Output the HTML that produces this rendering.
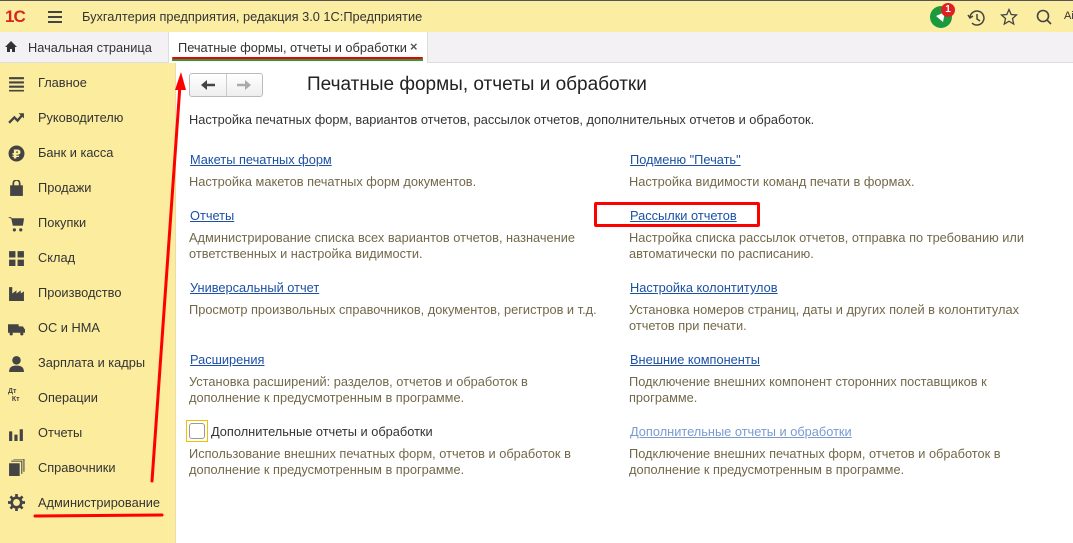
<!DOCTYPE html>
<html><head><meta charset="utf-8"><style>
*{margin:0;padding:0;box-sizing:border-box}
body{width:1073px;height:543px;overflow:hidden;position:relative;background:#fff;font-family:"Liberation Sans",sans-serif;font-size:12.8px;color:#333}
.abs{position:absolute;white-space:nowrap}
#top{position:absolute;left:0;top:0;width:1073px;height:32px;background:#fbeda2;border-top:1px solid #555}
#tabs{position:absolute;left:0;top:32px;width:1073px;height:31px;background:#f4f1f5;border-bottom:1px solid #ddd}
#side{position:absolute;left:0;top:63px;width:176px;height:480px;background:#fcec9e;border-right:1px solid #e8dfa8}
.si{position:absolute;left:38px;font-size:12.8px;color:#333}
.ic{position:absolute;left:8px;width:17px;height:17px}
.lk{position:absolute;color:#1c50a5;text-decoration:underline;font-size:12.8px;white-space:nowrap}
.ds{position:absolute;color:#72684a;font-size:12.8px;line-height:16px;white-space:nowrap}
</style></head><body>
<div id="top">
 <div class="abs" style="left:5px;top:6px;font:bold 17px 'Liberation Sans';color:#d9261c;letter-spacing:-1px">1С</div>
 <div class="abs" style="left:48px;top:10px;width:14px;height:2px;background:#444;box-shadow:0 5px 0 #444,0 10px 0 #444"></div>
 <div class="abs" style="left:82px;top:8px;color:#333">Бухгалтерия предприятия, редакция 3.0 1С:Предприятие</div>
 <div class="abs" style="left:930px;top:5px;width:22px;height:22px;border-radius:50%;background:#1a9a3c"></div>
 <svg class="abs" style="left:934px;top:9px" width="14" height="14"><path d="M2 6 L11 2 L9 12 Z" fill="#fff"/></svg>
 <div class="abs" style="left:941px;top:2px;width:14px;height:14px;border-radius:50%;background:#e02020;color:#fff;font:bold 10px 'Liberation Sans';text-align:center;line-height:14px">1</div>
 <svg class="abs" style="left:966px;top:7px" width="20" height="20" fill="none" stroke="#444" stroke-width="1.5"><path d="M4 9 A7 7 0 1 1 6 15"/><path d="M2 7 L4 10 L7 8"/><path d="M11 6 V11 L14 13"/></svg>
 <svg class="abs" style="left:1000px;top:7px" width="18" height="18" fill="none" stroke="#444" stroke-width="1.3"><path d="M9 1.5 L11.2 6.5 L16.5 7 L12.5 10.5 L13.7 16 L9 13.2 L4.3 16 L5.5 10.5 L1.5 7 L6.8 6.5 Z"/></svg>
 <svg class="abs" style="left:1035px;top:7px" width="18" height="18" fill="none" stroke="#444" stroke-width="1.6"><circle cx="8" cy="8" r="5.5"/><path d="M12 12 L16 16"/></svg>
 <div class="abs" style="left:1064px;top:9px;font-size:11px">Ai</div>
</div>
<div id="tabs">
 <svg class="abs" style="left:4px;top:8px" width="14" height="13"><path d="M7 1 L13 7 H11 V12 H8 V9 H6 V12 H3 V7 H1 Z" fill="#333"/></svg>
 <div class="abs" style="left:28px;top:8px">Начальная страница</div>
 <div class="abs" style="left:168px;top:0;width:260px;height:31px;background:#fff;border-left:1px solid #ddd;border-right:1px solid #ddd"></div>
 <div class="abs" style="left:178px;top:8px">Печатные формы, отчеты и обработки</div>
 <div class="abs" style="left:410px;top:7px;font-weight:bold;color:#555">×</div>
 <div class="abs" style="left:172px;top:25px;width:251px;height:2px;background:#e00;border-radius:1px"></div>
 <div class="abs" style="left:172px;top:27px;width:251px;height:2px;background:#2a9a3c"></div>
</div>
<div id="side">
 <svg class="ic" style="top:12px" viewBox="0 0 16 16"><path d="M1 2h14v2H1zM1 6h14v2H1zM1 10h14v2H1zM1 14h14v1.5H1z" fill="#444"/></svg><div class="si" style="top:12px">Главное</div>
 <svg class="ic" style="top:47px" viewBox="0 0 16 16"><path d="M1 12 L6 7 L9 10 L14 4" fill="none" stroke="#444" stroke-width="2.2"/><path d="M10 3h5v5z" fill="#444"/></svg><div class="si" style="top:47px">Руководителю</div>
 <svg class="ic" style="top:82px" viewBox="0 0 16 16"><circle cx="8" cy="8" r="7.5" fill="#444"/><text x="8" y="12.5" font-size="12" font-weight="bold" fill="#fcec9e" text-anchor="middle" font-family="DejaVu Sans">₽</text></svg><div class="si" style="top:82px">Банк и касса</div>
 <svg class="ic" style="top:117px" viewBox="0 0 16 16"><path d="M2 5h12v10H2z" fill="#444"/><path d="M5 7V3a3 3 0 0 1 6 0v4" fill="none" stroke="#444" stroke-width="1.6"/></svg><div class="si" style="top:117px">Продажи</div>
 <svg class="ic" style="top:152px" viewBox="0 0 16 16"><path d="M0 2h3l2 8h9l1-6H4" fill="#444"/><path d="M3 3h12l-1.5 7h-9z" fill="#444"/><circle cx="6" cy="14" r="1.5" fill="#444"/><circle cx="12" cy="14" r="1.5" fill="#444"/></svg><div class="si" style="top:152px">Покупки</div>
 <svg class="ic" style="top:187px" viewBox="0 0 16 16"><path d="M1 1h6v6H1zM9 1h6v6H9zM1 9h6v6H1zM9 9h6v6H9z" fill="#444"/></svg><div class="si" style="top:187px">Склад</div>
 <svg class="ic" style="top:222px" viewBox="0 0 16 16"><path d="M1 15V2h3v6l4-3v3l4-3v3l3-2v9z" fill="#444"/></svg><div class="si" style="top:222px">Производство</div>
 <svg class="ic" style="top:257px" viewBox="0 0 16 16"><path d="M0 4h10v8H0zM10 6h4l2 3v3h-6z" fill="#444"/><circle cx="3" cy="13" r="1.5" fill="#444"/><circle cx="13" cy="13" r="1.5" fill="#444"/></svg><div class="si" style="top:257px">ОС и НМА</div>
 <svg class="ic" style="top:292px" viewBox="0 0 16 16"><circle cx="8" cy="5" r="4" fill="#444"/><path d="M1 16c0-5 3-6 7-6s7 1 7 6z" fill="#444"/></svg><div class="si" style="top:292px">Зарплата и кадры</div>
 <div class="abs" style="left:8px;top:325px;font:bold 7px 'Liberation Sans';color:#444;line-height:8px">Дт<br>&nbsp;&nbsp;Кт</div><div class="si" style="top:327px">Операции</div>
 <svg class="ic" style="top:362px" viewBox="0 0 16 16"><path d="M1 6h3v9H1zM6 9h3v6H6zM11 4h3v11h-3z" fill="#444"/></svg><div class="si" style="top:362px">Отчеты</div>
 <svg class="ic" style="top:396px" viewBox="0 0 16 16"><path d="M1 4h10v12H1z" fill="#444"/><path d="M3 2h10v12M5 0h10v12" fill="none" stroke="#444"/></svg><div class="si" style="top:397px">Справочники</div>
 <svg class="ic" style="top:431px" viewBox="0 0 16 16"><circle cx="8" cy="8" r="4.5" fill="none" stroke="#444" stroke-width="2.5"/><path d="M8 0v3M8 13v3M0 8h3M13 8h3M2.3 2.3l2.2 2.2M11.5 11.5l2.2 2.2M2.3 13.7l2.2-2.2M11.5 4.5l2.2-2.2" stroke="#444" stroke-width="2.5"/></svg><div class="si" style="top:432px">Администрирование</div>
</div>
<div class="abs" style="left:189px;top:73px;width:74px;height:24px;border:1px solid #bbb;border-radius:3px;background:linear-gradient(#fff,#eee)"></div>
<div class="abs" style="left:226px;top:74px;width:1px;height:22px;background:#ccc"></div>
<svg class="abs" style="left:200px;top:78px" width="16" height="14"><path d="M4 7h11" stroke="#444" stroke-width="2.5"/><path d="M1 7l6-5v10z" fill="#444"/></svg>
<svg class="abs" style="left:236px;top:78px" width="16" height="14"><path d="M1 7h10" stroke="#aaa" stroke-width="2.5"/><path d="M15 7l-6-5v10z" fill="#aaa"/></svg>
<div class="abs" style="left:307px;top:74px;font-size:19px;color:#222">Печатные формы, отчеты и обработки</div>
<div class="abs" style="left:189px;top:112px;color:#333">Настройка печатных форм, вариантов отчетов, рассылок отчетов, дополнительных отчетов и обработок.</div>

<div class="lk" style="left:190px;top:152px">Макеты печатных форм</div>
<div class="ds" style="left:189px;top:174px">Настройка макетов печатных форм документов.</div>
<div class="lk" style="left:190px;top:208px">Отчеты</div>
<div class="ds" style="left:189px;top:230px">Администрирование списка всех вариантов отчетов, назначение<br>ответственных и настройка видимости.</div>
<div class="lk" style="left:190px;top:280px">Универсальный отчет</div>
<div class="ds" style="left:189px;top:302px">Просмотр произвольных справочников, документов, регистров и т.д.</div>
<div class="lk" style="left:190px;top:352px">Расширения</div>
<div class="ds" style="left:189px;top:374px">Установка расширений: разделов, отчетов и обработок в<br>дополнение к предусмотренным в программе.</div>
<div class="abs" style="left:186px;top:420px;width:22px;height:22px;border:1px solid #f0c000"></div>
<div class="abs" style="left:189px;top:423px;width:16px;height:16px;border:1px solid #999;border-radius:3px;background:#fff"></div>
<div class="abs" style="left:211px;top:424px;color:#333">Дополнительные отчеты и обработки</div>
<div class="ds" style="left:189px;top:446px">Использование внешних печатных форм, отчетов и обработок в<br>дополнение к предусмотренным в программе.</div>

<div class="lk" style="left:630px;top:152px">Подменю "Печать"</div>
<div class="ds" style="left:629px;top:174px">Настройка видимости команд печати в формах.</div>
<div class="abs" style="left:594px;top:202px;width:166px;height:25px;border:3px solid #f00;border-radius:2px"></div>
<div class="lk" style="left:630px;top:208px">Рассылки отчетов</div>
<div class="ds" style="left:629px;top:230px">Настройка списка рассылок отчетов, отправка по требованию или<br>автоматически по расписанию.</div>
<div class="lk" style="left:630px;top:280px">Настройка колонтитулов</div>
<div class="ds" style="left:629px;top:302px">Установка номеров страниц, даты и других полей в колонтитулах<br>отчетов при печати.</div>
<div class="lk" style="left:630px;top:352px">Внешние компоненты</div>
<div class="ds" style="left:629px;top:374px">Подключение внешних компонент сторонних поставщиков к<br>программе.</div>
<div class="lk" style="left:630px;top:424px;color:#7a9bd0">Дополнительные отчеты и обработки</div>
<div class="ds" style="left:629px;top:446px">Подключение внешних печатных форм, отчетов и обработок в<br>дополнение к предусмотренным в программе.</div>

<svg class="abs" style="left:0;top:0" width="1073" height="543">
 <path d="M152 481 L180 85" stroke="#f00" stroke-width="3" stroke-linecap="round"/>
 <path d="M181 72 L175 90 L186 90 Z" fill="#f00"/>
 <path d="M35 516 L162 515" stroke="#f00" stroke-width="3" stroke-linecap="round"/>
</svg>
</body></html>
